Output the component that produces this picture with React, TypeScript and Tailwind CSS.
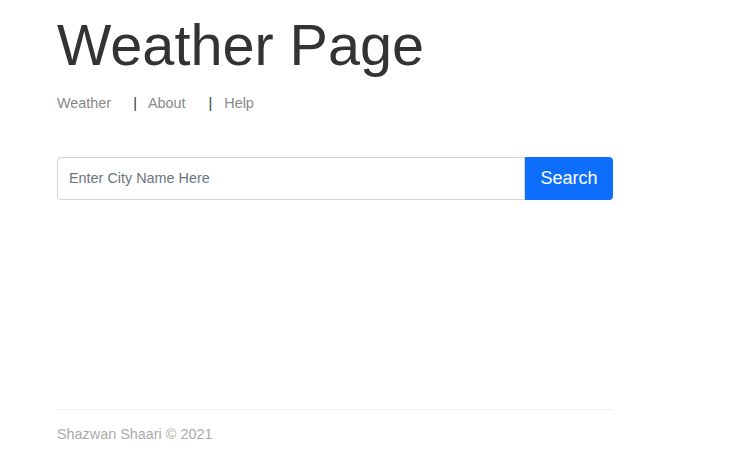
const links = [
  { label: "Weather", gap: "mr-[22px]", sep: "" },
  { label: "About", gap: "mr-[23px]", sep: "mr-[11px]" },
  { label: "Help", gap: "", sep: "mr-[12px]" },
];

export default function App() {
  return (
    <div className="min-h-[467px] bg-white font-['Liberation_Sans',Arial,sans-serif]">
      <div className="mx-[57px] w-[556px] flex flex-col min-h-[467px]">
        <h1 className="mt-[13px] text-[57.6px] leading-[64px] text-[#333333]">Weather Page</h1>
        <nav className="mt-[18px] flex items-center text-[14.4px] leading-[16px] text-[#888888]">
          {links.map((l, i) => (
            <div key={l.label} className="flex items-center">
              {i > 0 && <span className={`${l.sep} text-[#333333]`}>|</span>}
              <a href="#" className={l.gap}>
                {l.label}
              </a>
            </div>
          ))}
        </nav>
        <form className="mt-[46px] flex h-[43px]" onSubmit={(e) => e.preventDefault()}>
          <input
            placeholder="Enter City Name Here"
            className="flex-1 rounded-l-[4px] border border-[#ced4da] px-[11px] text-[14.4px] text-[#495057] placeholder:text-[#6c757d] outline-none"
          />
          <button className="w-[88px] rounded-r-[4px] bg-[#0d6efd] text-[18px] text-white">Search</button>
        </form>
        <footer className="mt-auto pb-[22px]">
          <div className="border-t border-[#eeeeee] pt-[14px] pb-[1px] text-[14.4px] leading-[20px] text-[#aaaaaa]">
            Shazwan Shaari © 2021
          </div>
        </footer>
      </div>
    </div>
  );
}
